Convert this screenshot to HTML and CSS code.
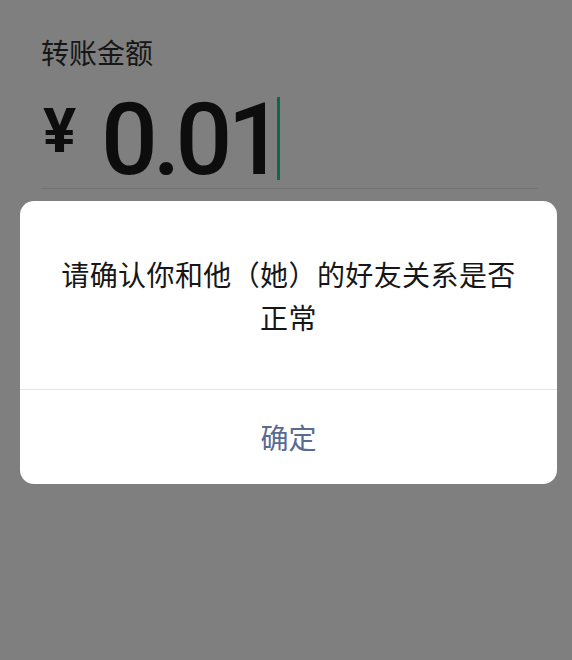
FILE: index.html
```html
<!DOCTYPE html>
<html lang="zh-CN">
<head>
    <meta charset="UTF-8">
    <meta name="viewport" content="width=device-width, initial-scale=1.0">
    <title>转账</title>
    <link rel="stylesheet" href="styles.css">
</head>
<body>
    <div class="page">
        <div class="label">转账金额</div>
        <div class="amount-row">
            <span class="yen">¥</span>
            <span class="amount">0.01</span>
            <span class="cursor"></span>
        </div>
    </div>

    <div class="dialog">
        <div class="dialog-text">请确认你和他（她）的好友关系是否正常</div>
        <div class="dialog-btn">确定</div>
    </div>
</body>
</html>
```

FILE: styles.css
```css
body {
    margin: 0;
    background-color: #7f7f7f;
    font-family: "Noto Sans CJK SC", "Noto Sans", sans-serif;
}
.page {
    padding: 30px 34px 0 41px;
}
.label {
    font-size: 28px;
    line-height: 44px;
    color: #161616;
}
.amount-row {
    display: flex;
    align-items: center;
    height: 100px;
    margin-top: 14px;
    border-bottom: 1px solid #727272;
}
.yen {
    font-family: "Roboto", sans-serif;
    font-weight: 700;
    font-size: 62px;
    color: #0d0d0d;
    margin: -16px 0 0 2px;
    width: 58px;
}
.amount {
    font-family: "Roboto", sans-serif;
    font-weight: 500;
    font-size: 100px;
    letter-spacing: -5px;
    color: #0d0d0d;
    line-height: 100px;
    margin-top: 4px;
}
.cursor {
    width: 3px;
    height: 83px;
    background-color: #0b6a45;
    margin-left: -2px;
}
.dialog {
    width: 537px;
    margin: 12px 0 0 20px;
    background-color: #fff;
    border-radius: 14px;
    overflow: hidden;
}
.dialog-text {
    padding: 52px 30px 50px;
    font-size: 28px;
    letter-spacing: 0.4px;
    line-height: 43px;
    text-align: center;
    color: #161616;
    border-bottom: 1px solid #e5e5e5;
}
.dialog-btn {
    height: 94px;
    line-height: 94px;
    text-align: center;
    font-size: 28px;
    color: #576b95;
}
```
